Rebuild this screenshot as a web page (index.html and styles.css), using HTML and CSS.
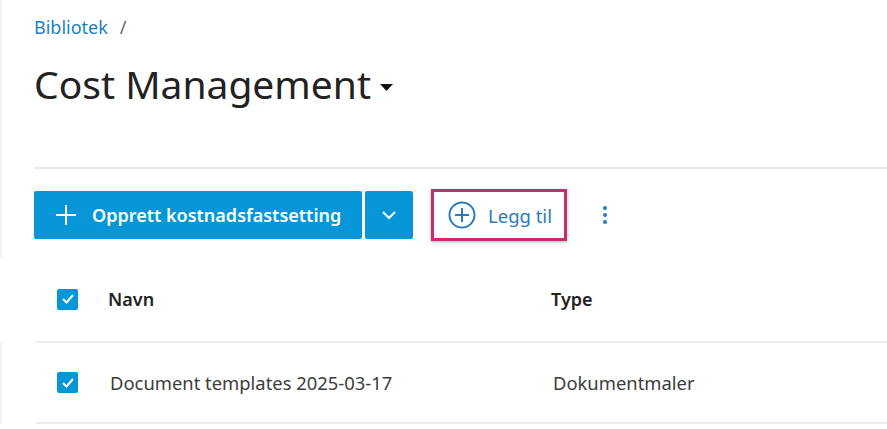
FILE: index.html
```html
<!DOCTYPE html>
<html>
    <head>
        <title>Cost Management</title>
        <link rel="stylesheet" href="styles.css">
    </head>
    <body>
        <div class="side top">
            <nav class="breadcrumb">
                <a href="#">Bibliotek</a>
                <span class="sep">/</span>
            </nav>
            <h1 class="title">Cost Management
                <svg class="caret" width="13" height="7" viewBox="0 0 13 7"><path d="M0 0h13L6.5 7z" fill="#111"/></svg>
            </h1>
            <hr class="divider">
            <div class="toolbar">
                <div class="split">
                    <button class="btn_main">
                        <svg width="22" height="22" viewBox="0 0 22 22"><path d="M11 1v20M1 11h20" stroke="#fff" stroke-width="2"/></svg>
                        Opprett kostnadsfastsetting
                    </button>
                    <button class="btn_drop">
                        <svg width="16" height="10" viewBox="0 0 16 10"><path d="M2 2l6 6 6-6" stroke="#fff" stroke-width="2" fill="none"/></svg>
                    </button>
                </div>
                <div class="highlight">
                    <button class="btn_add">
                        <svg width="28" height="28" viewBox="0 0 28 28"><circle cx="14" cy="14" r="12.5" stroke="#2a7bbd" stroke-width="2" fill="none"/><path d="M14 7v14M7 14h14" stroke="#2a7bbd" stroke-width="2"/></svg>
                        Legg til
                    </button>
                </div>
                <button class="kebab">
                    <span></span><span></span><span></span>
                </button>
            </div>
        </div>
        <div class="table">
            <div class="row head">
                <div class="cell check"><span class="box"><svg width="14" height="12" viewBox="0 0 14 12"><path d="M2 6l3.5 3.5L12 2" stroke="#fff" stroke-width="2" fill="none"/></svg></span></div>
                <div class="cell name">Navn</div>
                <div class="cell type">Type</div>
            </div>
            <div class="side">
                <div class="row">
                    <div class="cell check"><span class="box"><svg width="14" height="12" viewBox="0 0 14 12"><path d="M2 6l3.5 3.5L12 2" stroke="#fff" stroke-width="2" fill="none"/></svg></span></div>
                    <div class="cell name">Document templates 2025-03-17</div>
                    <div class="cell type">Dokumentmaler</div>
                </div>
            </div>
        </div>
    </body>
</html>
```

FILE: styles.css
```css
body{
    margin: 0;
    font-family: "Noto Sans", sans-serif;
    color: #3c3c3c;
    background: #fff;
}
.side{
    border-left: 2px solid #f1f1f1;
}
.top{
    padding-left: 32px;
    padding-top: 15px;
    padding-bottom: 16px;
}
.breadcrumb{
    font-size: 18px;
    line-height: 24px;
    display: flex;
    gap: 12px;
}
.breadcrumb a{
    color: #1a7fc4;
    text-decoration: none;
}
.sep{
    color: #666;
}
.title{
    margin: 22px 0 0;
    font-size: 39px;
    font-weight: normal;
    line-height: 46px;
    color: #222;
    display: flex;
    align-items: center;
    gap: 9px;
}
.caret{
    margin-top: 6px;
}
.divider{
    margin: 60px 0 0;
    border: none;
    border-top: 2px solid #e9e9e9;
}
.toolbar{
    display: flex;
    align-items: center;
    margin-top: 20px;
    height: 52px;
}
.split{
    display: flex;
    gap: 3px;
}
button{
    font-family: inherit;
    cursor: pointer;
}
.btn_main, .btn_drop{
    background: #0696d7;
    border: none;
    border-radius: 2px;
    color: #fff;
    height: 48px;
    font-size: 18px;
    font-weight: 600;
    display: flex;
    align-items: center;
}
.btn_main{
    width: 328px;
    padding: 0 0 0 21px;
    gap: 15px;
}
.btn_drop{
    width: 48px;
    justify-content: center;
}
.highlight{
    margin-left: 18px;
    border: 3px solid #c2306f;
    box-shadow: 0 1px 3px rgba(0,0,0,0.3);
    height: 46px;
    display: flex;
    align-items: center;
}
.btn_add{
    background: #fff;
    border: none;
    color: #2a7bbd;
    font-size: 18.5px;
    display: flex;
    align-items: center;
    gap: 12px;
    padding: 0 12px 0 14px;
    height: 46px;
}
.kebab{
    margin-left: 36px;
    background: none;
    border: none;
    display: flex;
    flex-direction: column;
    gap: 3px;
    padding: 0;
}
.kebab span{
    width: 4px;
    height: 4px;
    border-radius: 50%;
    background: #1a7fc4;
}
.row{
    display: flex;
    align-items: center;
    height: 79px;
    margin-left: 34px;
    border-bottom: 2px solid #ececec;
    font-size: 18.4px;
}
.row.head{
    height: 84px;
    margin-left: 36px;
    font-size: 18px;
    font-weight: 600;
    color: #222;
}
.check{
    box-sizing: border-box;
    width: 74px;
    padding-left: 21px;
    display: flex;
}
.head .check{
    width: 72px;
}
.box{
    width: 21px;
    height: 21px;
    border-radius: 2px;
    background: #0696d7;
    display: flex;
    align-items: center;
    justify-content: center;
}
.name{
    width: 443px;
}
```
